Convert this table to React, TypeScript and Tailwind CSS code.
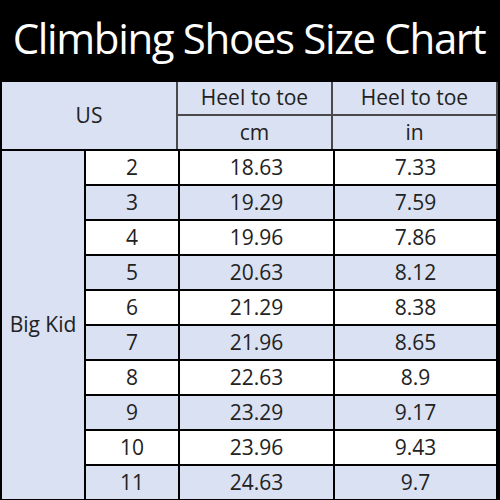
import React from "react";

const rows: [string, string, string][] = [
  ["2", "18.63", "7.33"],
  ["3", "19.29", "7.59"],
  ["4", "19.96", "7.86"],
  ["5", "20.63", "8.12"],
  ["6", "21.29", "8.38"],
  ["7", "21.96", "8.65"],
  ["8", "22.63", "8.9"],
  ["9", "23.29", "9.17"],
  ["10", "23.96", "9.43"],
  ["11", "24.63", "9.7"],
];

export default function App() {
  return (
    <div
      className="w-[500px] h-[500px] bg-black overflow-hidden"
      style={{ fontFamily: '"Open Sans", "Noto Sans", sans-serif' }}
    >
      <div className="h-[82px] flex items-center justify-center text-white text-[42px] leading-none tracking-[-1.35px] whitespace-nowrap pb-[6px] pr-[2px]">
        Climbing Shoes Size Chart
      </div>
      <div className="px-[2px]">
        <div className="grid grid-cols-[174px_153px_163px] grid-rows-[32px_33px] gap-[2px] bg-[#4a4a4a] text-[#222] text-[21px]">
          <div className="row-span-2 bg-[#d9e1f2] flex items-center justify-center">US</div>
          <div className="bg-[#d9e1f2] flex items-center justify-center">Heel to toe</div>
          <div className="bg-[#d9e1f2] flex items-center justify-center">Heel to toe</div>
          <div className="bg-[#d9e1f2] flex items-center justify-center">cm</div>
          <div className="bg-[#d9e1f2] flex items-center justify-center">in</div>
        </div>
      </div>
      <div className="px-[2px] pt-[2px] pb-[1px]">
        <div className="grid grid-cols-[82px_92px_153px_161px] grid-rows-[repeat(10,33px)] gap-[2px] text-[#222] text-[21px]">
          <div className="row-span-10 bg-[#d9e1f2] flex items-center justify-center">Big Kid</div>
          {rows.map(([us, cm, inch], i) => {
            const bg = i % 2 === 0 ? "bg-white" : "bg-[#d9e1f2]";
            return (
              <React.Fragment key={us}>
                <div className={`${bg} flex items-center justify-center`}>{us}</div>
                <div className={`${bg} flex items-center justify-center`}>{cm}</div>
                <div className={`${bg} flex items-center justify-center`}>{inch}</div>
              </React.Fragment>
            );
          })}
        </div>
      </div>
    </div>
  );
}
